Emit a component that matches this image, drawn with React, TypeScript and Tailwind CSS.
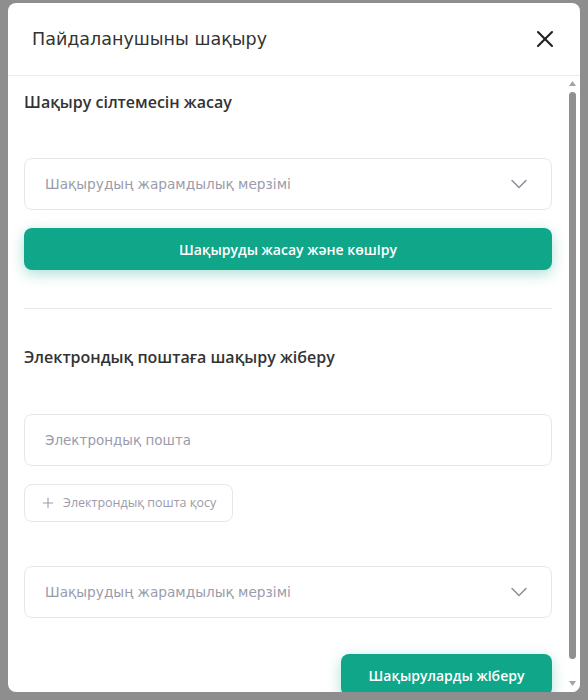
import React from 'react';
import { ChevronDown, Plus, X } from 'lucide-react';

const font = { fontFamily: '"DejaVu Sans", "Noto Sans", sans-serif' };
const strong = { fontFamily: '"Open Sans", "Noto Sans", sans-serif' };

const ExpirySelect: React.FC = () => (
  <div className="flex h-[52px] items-center justify-between rounded-lg border border-[#e6e7ec] bg-white pl-5 pr-[18px]">
    <span className="text-[13.7px] text-[#9a9cab]">Шақырудың жарамдылық мерзімі</span>
    <ChevronDown className="h-7 w-7 text-[#8e909c]" strokeWidth={1.3} />
  </div>
);

// classic scrollbar, the body is scrolled a little
const ScrollBar: React.FC = () => (
  <div className="flex w-[15px] shrink-0 flex-col items-center bg-white py-[4px]">
    <svg width="7" height="5" viewBox="0 0 7 5" className="mt-[1px]">
      <path d="M3.5 0 L7 5 L0 5 Z" fill="#a3a3a3" />
    </svg>
    <div className="mt-[6px] h-[567px] w-[7px] rounded-full bg-[#909090]" />
    <div className="flex-1" />
    <svg width="7" height="5" viewBox="0 0 7 5" className="mb-[2px]">
      <path d="M0 0 L7 0 L3.5 5 Z" fill="#a3a3a3" />
    </svg>
  </div>
);

export default function App() {
  return (
    <div className="h-[700px] w-full overflow-hidden bg-[#8e8e8e] px-2 pt-[3px]" style={font}>
      <div className="flex h-[689px] w-[572px] flex-col overflow-hidden rounded-lg bg-white">
        {/* header */}
        <div className="flex h-[73px] shrink-0 items-center justify-between border-b border-[#ececf0] pl-6 pr-[21px]">
          <h2 className="text-[17.5px] text-[#333]">Пайдаланушыны шақыру</h2>
          <X className="h-7 w-7 text-[#222]" strokeWidth={1.8} />
        </div>

        {/* body */}
        <div className="flex min-h-0 flex-1">
          <div className="min-w-0 flex-1 overflow-hidden pl-4 pr-[13px] pt-[14px]">
            <h3 className="text-[16px] font-semibold leading-6 text-[#333]" style={strong}>
              Шақыру сілтемесін жасау
            </h3>
            <div className="mt-[44px]">
              <ExpirySelect />
            </div>
            <button
              className="mt-[18px] flex h-[42px] w-full items-center justify-center rounded-lg bg-[#10a68a] text-[14px] font-semibold text-white shadow-[0_4px_14px_rgba(16,166,138,0.35)]"
              style={strong}
            >
              Шақыруды жасау және көшіру
            </button>

            <div className="mt-[38px] h-px bg-[#e6e7ec]" />

            <h3 className="mt-[36px] text-[16px] font-semibold leading-6 text-[#333]" style={strong}>
              Электрондық поштаға шақыру жіберу
            </h3>
            <div className="mt-[45px] flex h-[52px] items-center rounded-lg border border-[#e6e7ec] pl-5">
              <span className="text-[13.5px] text-[#9a9cab]">Электрондық пошта</span>
            </div>
            <button
              className="mt-[18px] flex h-[38px] items-center gap-[7px] rounded-lg border border-[#e6e7ec] pl-[15px] pr-4 text-[12.5px] text-[#9a9cab]"
              style={strong}
            >
              <Plus className="h-4 w-4" strokeWidth={1.6} />
              Электрондық пошта қосу
            </button>

            <div className="mt-[44px]">
              <ExpirySelect />
            </div>

            <div className="mt-[36px] flex justify-end">
              <button
                className="flex h-[42px] w-[211px] items-center justify-center rounded-lg bg-[#10a68a] text-[14px] font-semibold text-white shadow-[0_4px_14px_rgba(16,166,138,0.35)]"
                style={strong}
              >
                Шақыруларды жіберу
              </button>
            </div>
          </div>
          <ScrollBar />
        </div>
      </div>
    </div>
  );
}
